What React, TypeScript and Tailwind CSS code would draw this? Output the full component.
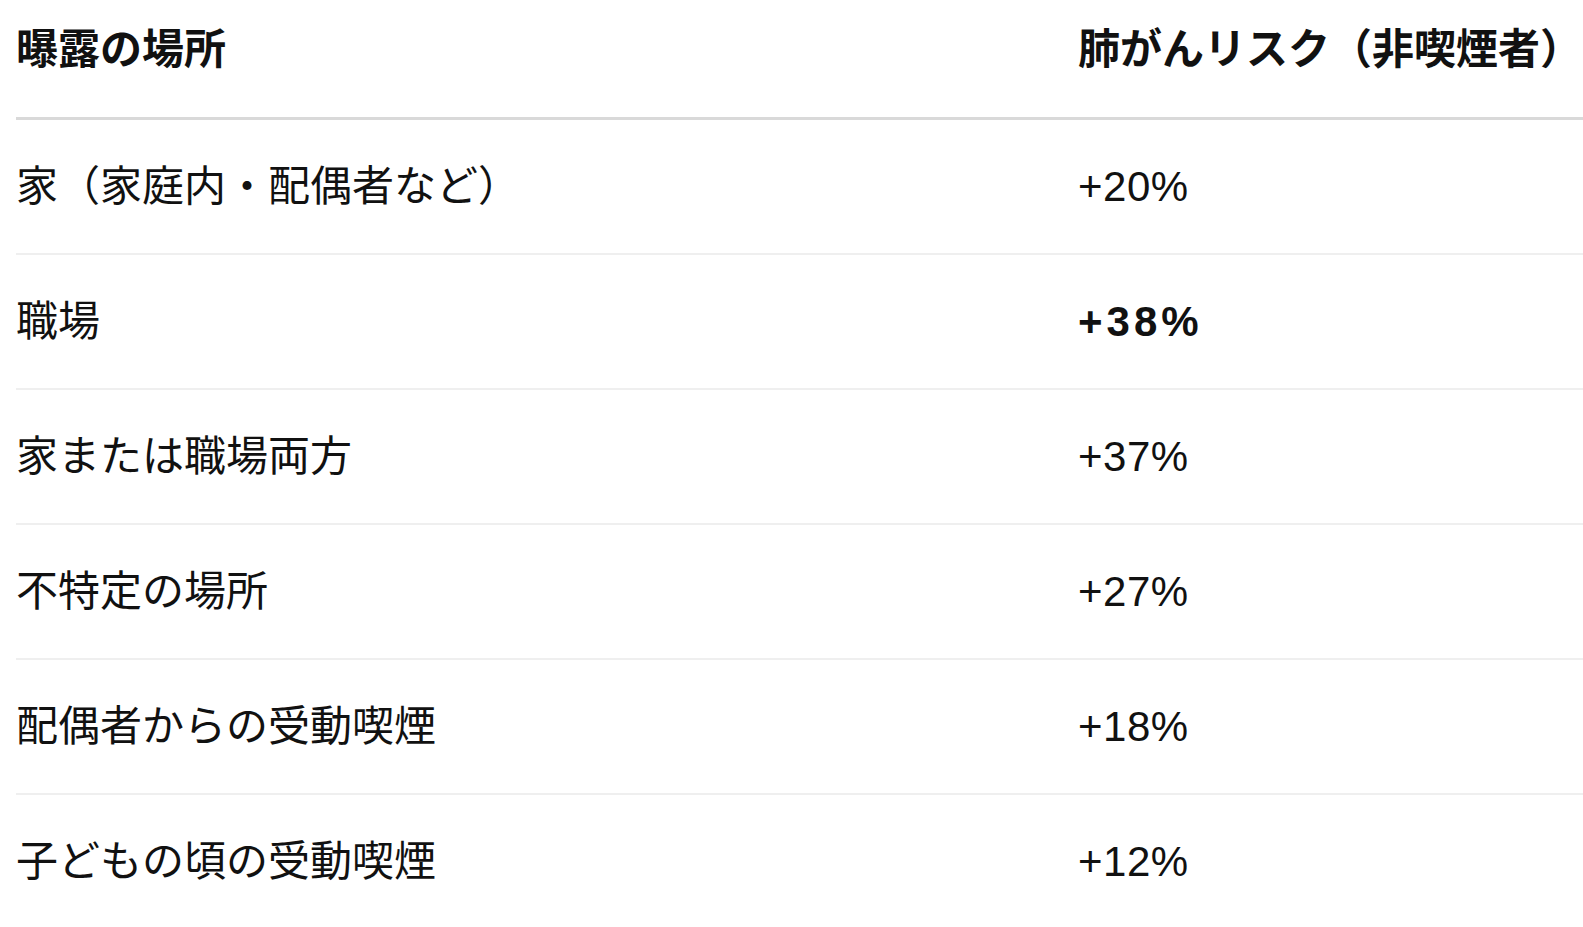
import React from "react";

const rows = [
  { place: "家（家庭内・配偶者など）", risk: "+20%" },
  { place: "職場", risk: "+38%", bold: true },
  { place: "家または職場両方", risk: "+37%" },
  { place: "不特定の場所", risk: "+27%" },
  { place: "配偶者からの受動喫煙", risk: "+18%" },
  { place: "子どもの頃の受動喫煙", risk: "+12%" },
];

const App = () => {
  return (
    <div
      className="min-h-screen bg-white text-[#111] pl-4 overflow-hidden"
      style={{ fontFamily: '"Liberation Sans", "Noto Sans CJK JP", sans-serif' }}
    >
      {/* 見出し行 */}
      <div className="grid grid-cols-[1062px_1fr] h-[120px] border-b-[3px] border-[#d9d9d9] text-[42px] font-bold leading-[42px] pt-[29px]">
        <div>曝露の場所</div>
        <div className="whitespace-nowrap">肺がんリスク（非喫煙者）</div>
      </div>

      {rows.map((row) => (
        <div
          key={row.place}
          className="grid grid-cols-[1062px_1fr] items-center h-[135px] border-b-2 border-[#efefef] text-[42px] leading-[42px]"
        >
          <div className="whitespace-nowrap">{row.place}</div>
          <div className={row.bold ? "font-bold tracking-[4px]" : "tracking-[0.5px]"}>{row.risk}</div>
        </div>
      ))}
    </div>
  );
};

export default App;
